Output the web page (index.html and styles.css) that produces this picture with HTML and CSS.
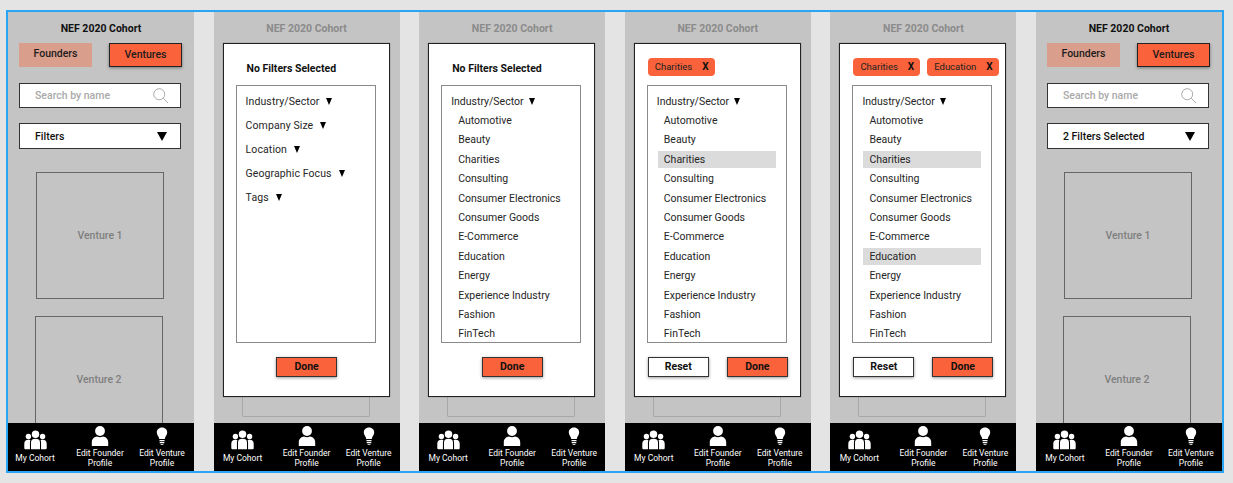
FILE: index.html
```html
<!DOCTYPE html>
<html lang="en">
<head>
  <meta charset="UTF-8">
  <title>NEF 2020 Cohort</title>
  <link rel="stylesheet" href="styles.css">
</head>
<body>

  <svg class="defs" width="0" height="0">
    <symbol id="icon-group" viewBox="0 0 24 20">
      <circle cx="12" cy="4" r="3.9"/>
      <circle cx="4.6" cy="6.4" r="2.8"/>
      <circle cx="19.4" cy="6.4" r="2.8"/>
      <path d="M7.3 19.6V12.6C7.3 9.6 9.2 8.6 12 8.6S16.7 9.6 16.7 12.6V19.6Z"/>
      <path d="M6.2 19.6H1.8C.8 19.6 .3 19 .3 18V14C.3 11 1.800 9.800 4.600 9.800 5.400 9.800 6 9.900 6.700 10.200 6.300 11 6.200 11.800 6.200 12.600Z"/>
      <path d="M17.800 19.600H22.200C23.200 19.600 23.700 19 23.700 18V14C23.700 11 22.200 9.800 19.400 9.800 18.600 9.800 18 9.900 17.300 10.200 17.700 11 17.800 11.800 17.800 12.600Z"/>
    </symbol>
    <symbol id="icon-person" viewBox="0 0 18 20">
      <circle cx="9" cy="5" r="4.900"/>
      <path d="M.8 20V16.200C.8 12.600 3.400 10.800 6 10.400 7.800 11.400 10.200 11.400 12 10.400 14.600 10.800 17.200 12.600 17.200 16.200V20Z"/>
    </symbol>
    <symbol id="icon-bulb" viewBox="0 0 20 20">
      <path d="M10 1.500C6.700 1.500 4.800 3.900 4.800 6.500 4.800 9.200 6.900 10.400 7.300 13H12.700C13.100 10.400 15.200 9.200 15.200 6.500 15.200 3.900 13.300 1.500 10 1.500Z"/>
      <path d="M7.500 14H12.500V15.200H7.500ZM7.700 16H12.300V17.200H7.700ZM8.400 18H11.600C11.400 19.200 8.600 19.200 8.400 18Z"/>
      <path class="rays" d="M0 6.500H2.800M1 1.500 3.200 3M1 11.500 3.200 10M20 6.500H17.200M19 1.500 16.800 3M19 11.500 16.800 10"/>
    </symbol>
    <symbol id="icon-search" viewBox="0 0 18 18">
      <circle cx="7" cy="7" r="6.200"/>
      <path d="M11.500 11.500 17 17"/>
    </symbol>
  </svg>

  <div class="frame">

    <!-- Skärm 1: listan -->
    <section class="screen">
      <h2 class="title">NEF 2020 Cohort</h2>
      <div class="main">
        <div class="tabs">
          <div class="tab">Founders</div>
          <div class="tab tab-active">Ventures</div>
        </div>
        <div class="field search">
          <span>Search by name</span>
          <svg class="search-icon"><use href="#icon-search"/></svg>
        </div>
        <div class="field filter">
          <span>Filters</span>
          <i class="arrow arrow-big"></i>
        </div>
        <div class="card card-one">Venture 1</div>
        <div class="card card-two">Venture 2</div>
      </div>
      <nav class="nav nav-first">
        <a><svg class="ico-group"><use href="#icon-group"/></svg>My Cohort</a>
        <a><svg class="ico-person"><use href="#icon-person"/></svg>Edit Founder<br>Profile</a>
        <a><svg class="ico-bulb"><use href="#icon-bulb"/></svg>Edit Venture<br>Profile</a>
      </nav>
    </section>

    <!-- Skärm 2: inga filter -->
    <section class="screen dimmed">
      <h2 class="title">NEF 2020 Cohort</h2>
      <div class="main"><div class="card card-behind"></div></div>
      <nav class="nav">
        <a><svg class="ico-group"><use href="#icon-group"/></svg>My Cohort</a>
        <a><svg class="ico-person"><use href="#icon-person"/></svg>Edit Founder<br>Profile</a>
        <a><svg class="ico-bulb"><use href="#icon-bulb"/></svg>Edit Venture<br>Profile</a>
      </nav>
      <div class="modal">
        <div class="modal-head"><strong class="none-selected">No Filters Selected</strong></div>
        <div class="box box-groups">
          <div class="group">Industry/Sector<i class="arrow"></i></div>
          <div class="group">Company Size<i class="arrow"></i></div>
          <div class="group">Location<i class="arrow"></i></div>
          <div class="group">Geographic Focus<i class="arrow"></i></div>
          <div class="group">Tags<i class="arrow"></i></div>
        </div>
        <div class="modal-foot foot-center"><button class="btn btn-done">Done</button></div>
      </div>
    </section>

    <!-- Skärm 3: öppen lista -->
    <section class="screen dimmed">
      <h2 class="title">NEF 2020 Cohort</h2>
      <div class="main"><div class="card card-behind"></div></div>
      <nav class="nav">
        <a><svg class="ico-group"><use href="#icon-group"/></svg>My Cohort</a>
        <a><svg class="ico-person"><use href="#icon-person"/></svg>Edit Founder<br>Profile</a>
        <a><svg class="ico-bulb"><use href="#icon-bulb"/></svg>Edit Venture<br>Profile</a>
      </nav>
      <div class="modal">
        <div class="modal-head"><strong class="none-selected">No Filters Selected</strong></div>
        <div class="box">
          <div class="group group-open">Industry/Sector<i class="arrow"></i></div>
          <ul class="options">
            <li>Automotive</li>
            <li>Beauty</li>
            <li>Charities</li>
            <li>Consulting</li>
            <li>Consumer Electronics</li>
            <li>Consumer Goods</li>
            <li>E-Commerce</li>
            <li>Education</li>
            <li>Energy</li>
            <li>Experience Industry</li>
            <li>Fashion</li>
            <li>FinTech</li>
          </ul>
        </div>
        <div class="modal-foot foot-center"><button class="btn btn-done">Done</button></div>
      </div>
    </section>

    <!-- Skärm 4: ett filter -->
    <section class="screen dimmed">
      <h2 class="title">NEF 2020 Cohort</h2>
      <div class="main"><div class="card card-behind"></div></div>
      <nav class="nav">
        <a><svg class="ico-group"><use href="#icon-group"/></svg>My Cohort</a>
        <a><svg class="ico-person"><use href="#icon-person"/></svg>Edit Founder<br>Profile</a>
        <a><svg class="ico-bulb"><use href="#icon-bulb"/></svg>Edit Venture<br>Profile</a>
      </nav>
      <div class="modal">
        <div class="modal-head">
          <span class="chip">Charities<b>X</b></span>
        </div>
        <div class="box">
          <div class="group group-open">Industry/Sector<i class="arrow"></i></div>
          <ul class="options">
            <li>Automotive</li>
            <li>Beauty</li>
            <li class="selected">Charities</li>
            <li>Consulting</li>
            <li>Consumer Electronics</li>
            <li>Consumer Goods</li>
            <li>E-Commerce</li>
            <li>Education</li>
            <li>Energy</li>
            <li>Experience Industry</li>
            <li>Fashion</li>
            <li>FinTech</li>
          </ul>
        </div>
        <div class="modal-foot">
          <button class="btn btn-reset">Reset</button>
          <button class="btn btn-done">Done</button>
        </div>
      </div>
    </section>

    <!-- Skärm 5: två filter -->
    <section class="screen dimmed">
      <h2 class="title">NEF 2020 Cohort</h2>
      <div class="main"><div class="card card-behind"></div></div>
      <nav class="nav">
        <a><svg class="ico-group"><use href="#icon-group"/></svg>My Cohort</a>
        <a><svg class="ico-person"><use href="#icon-person"/></svg>Edit Founder<br>Profile</a>
        <a><svg class="ico-bulb"><use href="#icon-bulb"/></svg>Edit Venture<br>Profile</a>
      </nav>
      <div class="modal">
        <div class="modal-head">
          <span class="chip">Charities<b>X</b></span>
          <span class="chip">Education<b>X</b></span>
        </div>
        <div class="box">
          <div class="group group-open">Industry/Sector<i class="arrow"></i></div>
          <ul class="options">
            <li>Automotive</li>
            <li>Beauty</li>
            <li class="selected">Charities</li>
            <li>Consulting</li>
            <li>Consumer Electronics</li>
            <li>Consumer Goods</li>
            <li>E-Commerce</li>
            <li class="selected">Education</li>
            <li>Energy</li>
            <li>Experience Industry</li>
            <li>Fashion</li>
            <li>FinTech</li>
          </ul>
        </div>
        <div class="modal-foot">
          <button class="btn btn-reset">Reset</button>
          <button class="btn btn-done">Done</button>
        </div>
      </div>
    </section>

    <!-- Skärm 6: resultat -->
    <section class="screen">
      <h2 class="title">NEF 2020 Cohort</h2>
      <div class="main">
        <div class="tabs">
          <div class="tab">Founders</div>
          <div class="tab tab-active">Ventures</div>
        </div>
        <div class="field search">
          <span>Search by name</span>
          <svg class="search-icon"><use href="#icon-search"/></svg>
        </div>
        <div class="field filter">
          <span>2 Filters Selected</span>
          <i class="arrow arrow-big"></i>
        </div>
        <div class="card card-one">Venture 1</div>
        <div class="card card-two">Venture 2</div>
      </div>
      <nav class="nav">
        <a><svg class="ico-group"><use href="#icon-group"/></svg>My Cohort</a>
        <a><svg class="ico-person"><use href="#icon-person"/></svg>Edit Founder<br>Profile</a>
        <a><svg class="ico-bulb"><use href="#icon-bulb"/></svg>Edit Venture<br>Profile</a>
      </nav>
    </section>

  </div>

</body>
</html>
```

FILE: styles.css
```css
* { box-sizing: border-box; }
html, body { height: 100%; }
body { margin: 0; background: #e4e4e4; font-family: Roboto, "Liberation Sans", sans-serif; color: #1c1c1c; overflow: hidden; }
.defs { position: absolute; }

.frame {
  width: 1218px; height: 463px; margin: 10px 0 0 6px; border: 2px solid #2aa5f5;
  display: flex; justify-content: space-between;
}

.screen { width: 186px; background: #c4c4c4; position: relative; display: flex; flex-direction: column; overflow: hidden; }
.title { margin: 0; height: 31px; padding-top: 10px; font-size: 10.5px; line-height: 13px; font-weight: 700; text-align: center; color: #111; }
.dimmed .title { color: #8b8b8b; }
.main { flex: 1; min-height: 0; overflow: hidden; padding: 0 12px 0 11px; }

.tabs { display: flex; justify-content: space-between; height: 24px; }
.tab { width: 73px; background: #d99e8c; font-size: 10.5px; font-weight: 500; line-height: 22px; text-align: center; }
.tab-active { background: #f9623a; border: 1px solid #222; box-shadow: 0 1px 3px rgba(0,0,0,0.4); }

.field { height: 26px; width: 162px; background: #fff; border: 1px solid #333; display: flex; align-items: center; justify-content: space-between; padding: 0 13px 0 15px; font-size: 10.5px; }
.search { margin-top: 16px; height: 25px; color: #a9a9a9; font-weight: 500; padding-right: 11px; }
.filter { margin-top: 15px; font-weight: 500; color: #111; }
.search-icon { width: 16px; height: 16px; fill: none; stroke: #a0a0a0; stroke-width: 1; }

.arrow { display: inline-block; width: 0; height: 0; margin-left: 7px; border-left: 3.8px solid transparent; border-right: 3.8px solid transparent; border-top: 7px solid #000; vertical-align: 0; }
.arrow-big { margin: 0; border-left-width: 5.5px; border-right-width: 5.5px; border-top-width: 9px; }

.card { width: 128px; background: #c4c4c4; border: 1px solid #666; display: flex; align-items: center; justify-content: center; font-size: 10.500px; font-weight: 500; color: #7f7f7f; }
.card-one { height: 127px; margin: 23px 0 0 17px; }
.card-two { height: 127px; margin: 17px 0 0 16px; }
.card-behind { height: 128px; margin: 246px 0 0 17px; border-color: #a8a8a8; border-radius: 1px; }

.nav { height: 48px; flex: none; background: #000; display: grid; grid-template-columns: 58px 70px 54px; color: #fff; font-size: 8.500px; line-height: 10px; text-align: center; }
.nav-first { grid-template-columns: 54px 76px 48px; }
.nav a { display: flex; flex-direction: column; align-items: center; justify-content: flex-end; padding-bottom: 3px; white-space: nowrap; position: relative; }
.nav svg { fill: #fff; display: block; }
.nav .rays { fill: none; stroke: #fff; stroke-width: 1; }
.ico-group { width: 23px; height: 20px; margin-bottom: 3px; }
.ico-person { width: 18px; height: 20px; margin-bottom: 2px; }
.ico-bulb { width: 20px; height: 20px; margin-bottom: 2px; }
.nav a:first-child { padding-bottom: 8px; }

.modal { position: absolute; left: 9px; top: 31px; width: 167px; height: 354px; background: #fff; border: 1px solid #222; display: flex; flex-direction: column; box-shadow: 0 0 1px rgba(0,0,0,0.5); }
.modal-head { height: 41px; flex: none; padding: 14px 0 0 13px; display: flex; gap: 7px; }
.none-selected { margin: 4px 0 0 10px; font-size: 10.500px; line-height: 13px; font-weight: 700; color: #111; }

.chip { height: 18px; padding: 0 6px 0 7px; background: #f9623a; border-radius: 4px; font-size: 9.500px; line-height: 17px; display: flex; justify-content: space-between; gap: 10px; color: #222; }
.chip b { font-size: 10px; color: #111; }

.box { margin-left: 12px; width: 140px; height: 258px; flex: none; border: 1px solid #8a8a8a; padding: 5px 10px 0 9px; font-size: 10.500px; overflow: hidden; color: #262626; }
.group { height: 24px; line-height: 22px; white-space: nowrap; }
.group-open { height: 21px; }
.group-open .arrow { margin-left: 5px; }
.box-groups .group { letter-spacing: 0.1px; }

.options { list-style: none; margin: 0; padding: 0; }
.options li { height: 17px; line-height: 17px; margin-bottom: 2.420px; padding-left: 6px; margin-left: 1px; white-space: nowrap; }
.options .selected { background: #dbdbdb; }

.modal-foot { display: flex; justify-content: space-between; padding: 14px 12px 0 13px; }
.foot-center { justify-content: center; }
.btn { width: 61px; height: 20px; padding: 0 0 2px; border: 1px solid #333; font-family: inherit; font-size: 10.500px; font-weight: 700; color: #111; box-shadow: 0 1px 3px rgba(0,0,0,0.4); }
.btn-done { background: #f9623a; }
.btn-reset { background: #fff; }
```
